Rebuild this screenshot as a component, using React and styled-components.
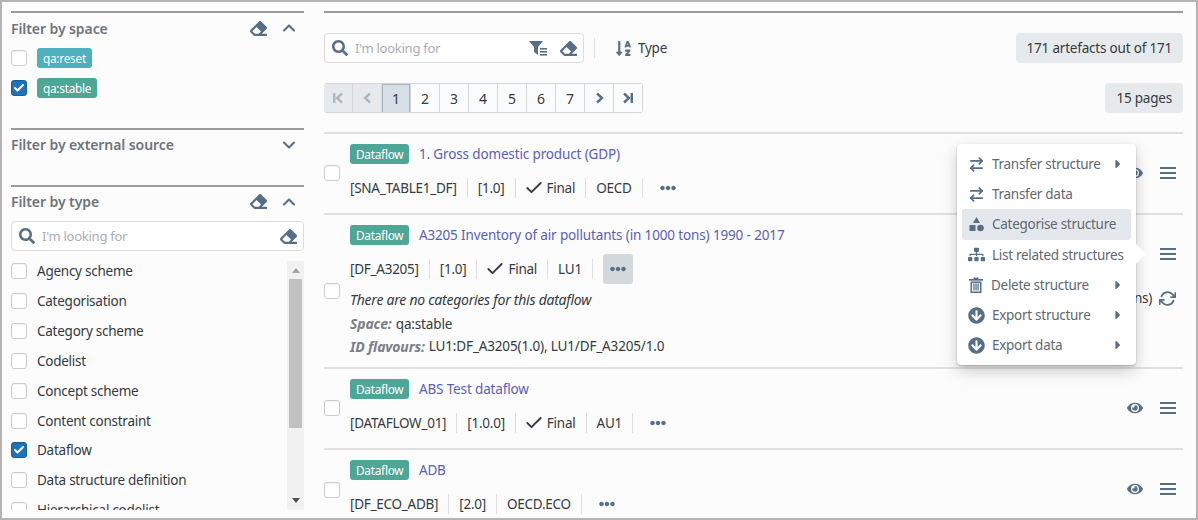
import React from "react";
import styled, { createGlobalStyle } from "styled-components";
import {
  FaEraser,
  FaSearch,
  FaSortAlphaDown,
  FaEye,
  FaEllipsisH,
  FaSitemap,
  FaArrowCircleDown,
  FaCaretRight,
} from "react-icons/fa";
import { FiChevronUp, FiChevronDown, FiCheck, FiRefreshCw } from "react-icons/fi";
import { ArrowRightLeft } from "lucide-react";

const slate = "#566f87";

const GlobalStyle = createGlobalStyle`
  html, body {
    margin: 0;
    padding: 0;
    background: #fcfcfc;
  }
  * {
    box-sizing: border-box;
  }
`;

const Page = styled.div`
  position: relative;
  display: grid;
  grid-template-columns: 293px 859px;
  column-gap: 20px;
  width: 1198px;
  height: 520px;
  padding: 9px 0 0 9px;
  overflow: hidden;
  background: #fcfcfc;
  border: 2px solid #b4b4b4;
  font-family: "Noto Sans", "Open Sans", sans-serif;
  font-size: 13.5px;
  letter-spacing: -0.25px;
  color: #343a40;
`;

const Sidebar = styled.aside`
  display: flex;
  flex-direction: column;
  min-height: 0;
`;

const Section = styled.section`
  border-top: 2px solid #9a9a9a;
  padding-bottom: ${(p) => p.$bottom || 0}px;
`;

const SectionHead = styled.div`
  display: flex;
  align-items: center;
  height: ${(p) => p.$height || 29}px;
  color: #6c757d;
  font-size: 14px;
  font-weight: 600;
  letter-spacing: -0.08px;
`;

const SectionTitle = styled.span`
  flex: 1;
`;

const HeadIcon = styled.span`
  display: inline-flex;
  justify-content: center;
  width: 20px;
  margin-left: ${(p) => p.$gap || 0}px;
  margin-right: ${(p) => p.$right || 0}px;
  color: ${slate};
`;

const OptionStack = styled.div`
  display: flex;
  flex-direction: column;
  gap: 10px;
  margin-top: 5px;
`;

const Option = styled.label`
  display: flex;
  align-items: center;
  gap: 10px;
  height: 20px;
`;

const Box = styled.span`
  flex: none;
  display: inline-flex;
  align-items: center;
  justify-content: center;
  width: 16px;
  height: 16px;
  border-radius: 3px;
  border: 1px solid ${(p) => (p.$checked ? "#1a5e96" : "#c9ccd0")};
  background: ${(p) => (p.$checked ? "#1f74b8" : "#fff")};
  color: #fff;
  box-shadow: inset 0 1px 1px rgba(0, 0, 0, 0.05);
`;

const Badge = styled.span`
  display: inline-flex;
  align-items: center;
  height: 20px;
  padding: 0 6px;
  border-radius: 3px;
  background: ${(p) => p.$color || "#4ea697"};
  color: #fff;
  font-size: 11.8px;
  white-space: nowrap;
`;

const SearchBox = styled.div`
  display: flex;
  align-items: center;
  gap: 7px;
  width: ${(p) => p.$width || "100%"};
  height: 30px;
  margin-top: ${(p) => p.$top || 0}px;
  padding: 0 6px 0 7px;
  background: #fff;
  border: 1px solid #dcdcdc;
  border-radius: 4px;
  color: ${slate};
`;

const Placeholder = styled.span`
  flex: 1;
  margin-top: -1px;
  color: #a9aeb3;
  font-size: 13px;
`;

const TypeList = styled.div`
  display: flex;
  height: 249px;
  margin-top: 10px;
  overflow: hidden;
`;

const TypeRows = styled.div`
  flex: 1;
  margin-top: -4.6px;
`;

const TypeRow = styled.label`
  display: flex;
  align-items: center;
  gap: 10px;
  height: 29.85px;
  white-space: nowrap;
`;

const ScrollTrack = styled.div`
  display: flex;
  flex-direction: column;
  align-items: center;
  width: 17px;
  background: #f1f1f1;
`;

const ScrollThumb = styled.div`
  width: 13px;
  height: 149px;
  margin-top: 6px;
  background: #c1c1c1;
`;

const ScrollArrow = styled.div`
  width: 0;
  height: 0;
  margin-top: ${(p) => (p.$down ? "auto" : "7px")};
  margin-bottom: ${(p) => (p.$down ? "7px" : "0")};
  border-left: 4px solid transparent;
  border-right: 4px solid transparent;
  border-bottom: ${(p) => (p.$down ? "0" : "5px solid #a3a3a3")};
  border-top: ${(p) => (p.$down ? "5px solid #505050" : "0")};
`;

const Main = styled.main`
  display: flex;
  flex-direction: column;
  min-width: 0;
  border-top: 2px solid #9a9a9a;
  padding-top: 20px;
`;

const Toolbar = styled.div`
  display: flex;
  align-items: center;
  height: 30px;
  margin-bottom: ${(p) => p.$bottom}px;
`;

const Divider = styled.span`
  width: 1px;
  height: 20px;
  margin: 0 20px 0 10px;
  background: #dcdfe2;
`;

const SortButton = styled.span`
  display: inline-flex;
  align-items: center;
  gap: 6px;
  color: #343a40;
  svg {
    color: ${slate};
  }
`;

const CountTag = styled.span`
  display: inline-flex;
  align-items: center;
  height: 30px;
  margin-left: auto;
  padding: 0 11px;
  background: #e7eaed;
  border-radius: 4px;
  letter-spacing: -0.2px;
  white-space: nowrap;
`;

const Pager = styled.div`
  display: flex;
  width: 319px;
  height: 30px;
  border-radius: 4px;
  overflow: hidden;
  background: #fff;
  box-shadow: inset 0 0 0 1px #d4d7da;
`;

const PagerCell = styled.span`
  flex: 1;
  display: inline-flex;
  align-items: center;
  justify-content: center;
  border: 1px solid #d4d7da;
  border-left: 0;
  background: ${(p) => (p.$active ? "#d6dee6" : p.$off ? "#e6eaee" : "#fbfcfd")};
  color: #343a40;
  box-shadow: ${(p) => (p.$active ? "inset 1px 1px 0 #a9b4bf, inset -1px 0 0 #a9b4bf" : "none")};
  font-size: 14px;
  svg {
    color: ${(p) => (p.$off ? "#aeb7bf" : slate)};
  }
`;

const Row = styled.div`
  display: flex;
  flex: none;
  align-items: center;
  height: ${(p) => p.$height}px;
  border-top: 2px solid #e0e0e0;
`;

const RowBox = styled.div`
  flex: none;
  width: 26px;
  margin-top: 3px;
`;

const RowBody = styled.div`
  flex: 1;
  align-self: flex-start;
  padding-top: 9.5px;
`;

const TitleLine = styled.div`
  display: flex;
  align-items: center;
  gap: 9.5px;
  height: 20px;
  margin-bottom: 9px;
`;

const TitleLink = styled.a`
  color: #5a60b5;
  letter-spacing: -0.14px;
  text-decoration: none;
`;

const Meta = styled.div`
  display: flex;
  align-items: center;
  height: 30px;
`;

const MetaItem = styled.span`
  display: inline-flex;
  align-items: center;
  gap: 3px;
  padding: 0 10px;
  border-left: 1px solid #dcdfe2;
  height: 20px;
  white-space: nowrap;
  &:first-child {
    padding-left: 0;
    border-left: 0;
  }
  svg {
    margin-left: -2px;
    color: #343a40;
  }
`;

const DotsButton = styled.span`
  display: inline-flex;
  align-items: center;
  justify-content: center;
  width: 30px;
  height: 30px;
  margin-left: 10px;
  border-radius: 3px;
  background: ${(p) => (p.$open ? "#d3d8dd" : "transparent")};
  color: ${slate};
`;

const MetaEnd = styled.span`
  width: 1px;
  height: 20px;
  background: #dcdfe2;
`;

const Details = styled.div`
  margin-top: 4px;
`;

const DetailLine = styled.div`
  height: ${(p) => p.$height}px;
  display: flex;
  align-items: center;
  gap: 4px;
  font-size: 13.5px;
  letter-spacing: -0.15px;
  white-space: nowrap;
`;

const DetailNote = styled(DetailLine)`
  font-size: 14px;
  font-style: italic;
  letter-spacing: -0.25px;
`;

const DetailLabel = styled.b`
  color: #7a8087;
  font-size: 14px;
  font-style: italic;
  font-weight: 700;
`;

const Actions = styled.div`
  flex: none;
  align-self: flex-start;
  display: flex;
  flex-direction: column;
  align-items: flex-end;
  padding: 29px 7px 0 0;
  gap: 24px;
  color: ${slate};
`;

const ActionRow = styled.div`
  display: flex;
  align-items: center;
  gap: ${(p) => p.$gap || 17}px;
  height: 20px;
  color: ${(p) => p.$text || slate};
  svg {
    color: ${slate};
  }
`;

const Menu = styled.div`
  position: absolute;
  top: 142px;
  left: 955px;
  width: 179px;
  height: 221px;
  padding: 5px;
  background: #fff;
  border-radius: 4px;
  box-shadow: 0 1px 2px rgba(0, 0, 0, 0.25), 0 6px 16px rgba(0, 0, 0, 0.2);
  &::after {
    content: "";
    position: absolute;
    top: 100px;
    left: 100%;
    border-left: 10px solid #fff;
    border-top: 10px solid transparent;
    border-bottom: 10px solid transparent;
  }
`;

const MenuItem = styled.div`
  display: flex;
  align-items: center;
  gap: 7px;
  height: 30.2px;
  padding: 0 0 0 6px;
  border-radius: 3px;
  background: ${(p) => (p.$active ? "#e4e8ec" : "transparent")};
  color: #5f6870;
  letter-spacing: -0.28px;
  white-space: nowrap;
  svg {
    flex: none;
    color: ${slate};
  }
`;

const MenuCaret = styled.span`
  display: inline-flex;
  margin-left: auto;
  margin-right: 6px;
`;

const Bars = () => (
  <svg width="16" height="14" viewBox="0 0 16 14" fill="currentColor">
    <rect y="1" width="16" height="2" />
    <rect y="6" width="16" height="2" />
    <rect y="11" width="16" height="2" />
  </svg>
);

const FilterList = () => (
  <svg width="18" height="15" viewBox="0 0 18 15" fill="currentColor" style={{ marginRight: 6 }}>
    <path d="M0 0h14L9 6v8L5 11V6z" />
    <rect x="11" y="7" width="7" height="1.6" />
    <rect x="11" y="10" width="7" height="1.6" />
    <rect x="11" y="13" width="7" height="1.6" />
  </svg>
);

const PageEnd = ({ flip }) => (
  <svg width="12" height="12" viewBox="0 0 12 12" fill="none" stroke="currentColor" strokeWidth="2.4">
    <g transform={flip ? "translate(12 0) scale(-1 1)" : undefined}>
      <path d="M2.2 1v10" />
      <path d="M10 1.5 5 6l5 4.500" />
    </g>
  </svg>
);

const PageStep = ({ flip }) => (
  <svg width="9" height="12" viewBox="0 0 9 12" fill="none" stroke="currentColor" strokeWidth="2.4">
    <path d={flip ? "M2 1.500 7 6l-5 4.500" : "M7 1.500 2 6l5 4.500"} />
  </svg>
);

const Shapes = () => (
  <svg width="17" height="16" viewBox="0 0 17 16" fill="currentColor">
    <path d="M8.500 1l3.500 6H5z" />
    <rect x="1.500" y="9" width="6" height="6" rx="0.5" />
    <circle cx="12.500" cy="12" r="3.300" />
  </svg>
);

const Trash = () => (
  <svg width="16" height="16" viewBox="0 0 16 16" fill="currentColor">
    <rect x="1" y="2" width="14" height="1.700" />
    <rect x="5.500" y="0.500" width="5" height="1.600" />
    <path d="M2.500 4.500h11V16h-11zM4 6v8.500h8V6z" fillRule="evenodd" />
    <rect x="5.300" y="6.500" width="1.300" height="7" />
    <rect x="7.400" y="6.500" width="1.300" height="7" />
    <rect x="9.500" y="6.500" width="1.300" height="7" />
  </svg>
);

const Check = ({ checked }) => (
  <Box $checked={checked}>{checked && <FiCheck size={12} strokeWidth={4} />}</Box>
);

const typeNames = [
  ["Agency scheme"],
  ["Categorisation"],
  ["Category scheme"],
  ["Codelist"],
  ["Concept scheme"],
  ["Content constraint"],
  ["Dataflow", true],
  ["Data structure definition"],
  ["Hierarchical codelist"],
];

const transferIcon = <ArrowRightLeft size={17} strokeWidth={2.4} />;

const menuItems = [
  { icon: transferIcon, label: "Transfer structure", more: true },
  { icon: transferIcon, label: "Transfer data" },
  { icon: <Shapes />, label: "Categorise structure", active: true },
  { icon: <FaSitemap size={17} />, label: "List related structures" },
  { icon: <Trash />, label: "Delete structure", more: true },
  { icon: <FaArrowCircleDown size={17} />, label: "Export structure", more: true },
  { icon: <FaArrowCircleDown size={17} />, label: "Export data", more: true },
];

const MetaLine = ({ items, final, owner, open }) => (
  <Meta>
    {items.map((t) => (
      <MetaItem key={t}>{t}</MetaItem>
    ))}
    {final && (
      <MetaItem>
        <FiCheck size={20} strokeWidth={2.2} />
        Final
      </MetaItem>
    )}
    <MetaItem>{owner}</MetaItem>
    <MetaEnd />
    <DotsButton $open={open}>
      <FaEllipsisH size={16} />
    </DotsButton>
  </Meta>
);

const App = () => (
  <Page>
    <GlobalStyle />
    <Sidebar>
      <Section $bottom={30}>
        <SectionHead $height={30}>
          <SectionTitle>Filter by space</SectionTitle>
          <HeadIcon><FaEraser size={17} /></HeadIcon>
          <HeadIcon $gap={11} $right={5}><FiChevronUp size={20} strokeWidth={2.5} /></HeadIcon>
        </SectionHead>
        <OptionStack>
          <Option><Check /><Badge $color="#4cb0bf">qa:reset</Badge></Option>
          <Option><Check checked /><Badge>qa:stable</Badge></Option>
        </OptionStack>
      </Section>
      <Section $bottom={26}>
        <SectionHead>
          <SectionTitle>Filter by external source</SectionTitle>
          <HeadIcon $right={5}><FiChevronDown size={20} strokeWidth={2.5} /></HeadIcon>
        </SectionHead>
      </Section>
      <Section>
        <SectionHead>
          <SectionTitle>Filter by type</SectionTitle>
          <HeadIcon><FaEraser size={17} /></HeadIcon>
          <HeadIcon $gap={11} $right={5}><FiChevronUp size={20} strokeWidth={2.5} /></HeadIcon>
        </SectionHead>
        <SearchBox $top={5}>
          <FaSearch size={16} />
          <Placeholder>I'm looking for</Placeholder>
          <FaEraser size={17} />
        </SearchBox>
        <TypeList>
          <TypeRows>
            {typeNames.map(([name, checked]) => (
              <TypeRow key={name}><Check checked={checked} />{name}</TypeRow>
            ))}
          </TypeRows>
          <ScrollTrack>
            <ScrollArrow />
            <ScrollThumb />
            <ScrollArrow $down />
          </ScrollTrack>
        </TypeList>
      </Section>
    </Sidebar>

    <Main>
      <Toolbar $bottom={20}>
        <SearchBox $width="260px">
          <FaSearch size={16} />
          <Placeholder>I'm looking for</Placeholder>
          <FilterList />
          <FaEraser size={17} />
        </SearchBox>
        <Divider />
        <SortButton><FaSortAlphaDown size={17} />Type</SortButton>
        <CountTag>171 artefacts out of 171</CountTag>
      </Toolbar>
      <Toolbar $bottom={19}>
        <Pager>
          <PagerCell $off><PageEnd /></PagerCell>
          <PagerCell $off><PageStep /></PagerCell>
          <PagerCell $active>1</PagerCell>
          {[2, 3, 4, 5, 6, 7].map((n) => (
            <PagerCell key={n}>{n}</PagerCell>
          ))}
          <PagerCell><PageStep flip /></PagerCell>
          <PagerCell><PageEnd flip /></PagerCell>
        </Pager>
        <CountTag>15 pages</CountTag>
      </Toolbar>

      <Row $height={81}>
        <RowBox><Check /></RowBox>
        <RowBody>
          <TitleLine><Badge>Dataflow</Badge><TitleLink>1. Gross domestic product (GDP)</TitleLink></TitleLine>
          <MetaLine items={["[SNA_TABLE1_DF]", "[1.0]"]} final owner="OECD" />
        </RowBody>
        <Actions>
          <ActionRow><FaEye size={16} /><Bars /></ActionRow>
        </Actions>
      </Row>

      <Row $height={154}>
        <RowBox><Check /></RowBox>
        <RowBody>
          <TitleLine><Badge>Dataflow</Badge><TitleLink>A3205 Inventory of air pollutants (in 1000 tons) 1990 - 2017</TitleLink></TitleLine>
          <MetaLine items={["[DF_A3205]", "[1.0]"]} final owner="LU1" open />
          <Details>
            <DetailNote $height={24}>There are no categories for this dataflow</DetailNote>
            <DetailLine $height={24}><DetailLabel>Space:</DetailLabel> qa:stable</DetailLine>
            <DetailLine $height={21}><DetailLabel>ID flavours:</DetailLabel> LU1:DF_A3205(1.0), LU1/DF_A3205/1.0</DetailLine>
          </Details>
        </RowBody>
        <Actions>
          <ActionRow><FaEye size={16} /><Bars /></ActionRow>
          <ActionRow $text="#343a40" $gap={7}>
            <span>(3 annotations)</span>
            <FiRefreshCw size={17} strokeWidth={2.5} />
          </ActionRow>
        </Actions>
      </Row>

      <Row $height={81}>
        <RowBox><Check /></RowBox>
        <RowBody>
          <TitleLine><Badge>Dataflow</Badge><TitleLink>ABS Test dataflow</TitleLink></TitleLine>
          <MetaLine items={["[DATAFLOW_01]", "[1.0.0]"]} final owner="AU1" />
        </RowBody>
        <Actions>
          <ActionRow><FaEye size={16} /><Bars /></ActionRow>
        </Actions>
      </Row>

      <Row $height={82}>
        <RowBox><Check /></RowBox>
        <RowBody>
          <TitleLine><Badge>Dataflow</Badge><TitleLink>ADB</TitleLink></TitleLine>
          <MetaLine items={["[DF_ECO_ADB]", "[2.0]"]} owner="OECD.ECO" />
        </RowBody>
        <Actions>
          <ActionRow><FaEye size={16} /><Bars /></ActionRow>
        </Actions>
      </Row>
    </Main>

    <Menu>
      {menuItems.map((item) => (
        <MenuItem key={item.label} $active={item.active}>
          {item.icon}
          {item.label}
          {item.more && <MenuCaret><FaCaretRight size={14} /></MenuCaret>}
        </MenuItem>
      ))}
    </Menu>
  </Page>
);

export default App;
